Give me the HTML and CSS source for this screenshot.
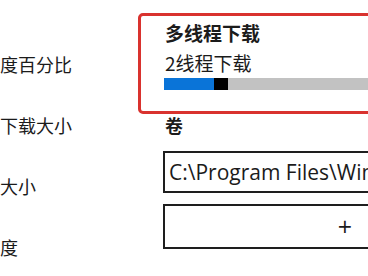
FILE: index.html
```html
<!DOCTYPE html>
<html lang="zh-CN">
<head>
<meta charset="utf-8">
<link rel="stylesheet" href="styles.css">
</head>
<body>
<div class="page">
  <div class="labels">
    <div class="label">度百分比</div>
    <div class="label">下载大小</div>
    <div class="label">大小</div>
    <div class="label">度</div>
  </div>
  <div class="panel">
    <div class="card">
      <div class="card-title">多线程下载</div>
      <div class="card-sub">2线程下载</div>
      <div class="bar">
        <div class="bar-blue"></div>
        <div class="bar-thumb"></div>
      </div>
    </div>
    <div class="section">卷</div>
    <div class="textbox">C:\Program Files\Win</div>
    <button class="addbtn">+</button>
  </div>
</div>
</body>
</html>
```
FILE: styles.css
```css
html, body {
  margin: 0;
  padding: 0;
  background: #ffffff;
  overflow: hidden;
}
body {
  width: 368px;
  height: 276px;
  font-family: "Noto Sans CJK SC", "Noto Sans", sans-serif;
  color: #1b1b1b;
}
.page {
  display: flex;
  width: 368px;
  overflow: hidden;
}
.labels {
  width: 138px;
  flex: none;
  display: flex;
  flex-direction: column;
  padding-top: 52px;
  gap: 37px;
}
.label {
  font-size: 18px;
  line-height: 24px;
  white-space: nowrap;
}
.panel {
  flex: none;
  width: 230px;
  display: flex;
  flex-direction: column;
  padding-top: 13px;
}
.card {
  width: 500px;
  height: 90px;
  border: 3px solid #d9322e;
  border-radius: 5px;
  padding: 5px 0 0 24px;
  box-sizing: content-box;
}
.card-title {
  font-size: 19px;
  line-height: 24px;
  font-weight: bold;
}
.card-sub {
  font-size: 19px;
  line-height: 24px;
  margin-top: 6px;
}
.bar {
  display: flex;
  margin-top: 3px;
  margin-left: -1px;
  height: 12px;
  width: 480px;
  background: #c2c2c2;
}
.bar-blue {
  width: 50px;
  background: #0a74d8;
}
.bar-thumb {
  width: 14px;
  background: #000000;
}
.section {
  margin-top: 0;
  margin-left: 27px;
  font-size: 18px;
  line-height: 22px;
  font-weight: bold;
}
.textbox {
  margin-top: 15px;
  margin-left: 25px;
  width: 400px;
  height: 38px;
  border: 2px solid #1e1e1e;
  font-family: "Open Sans", "Noto Sans", sans-serif;
  font-size: 21px;
  line-height: 38px;
  padding-left: 4px;
  white-space: nowrap;
  flex: none;
}
.addbtn {
  margin-top: 11px;
  margin-left: 25px;
  width: 364px;
  height: 45px;
  flex: none;
  border: 2px solid #1e1e1e;
  background: #ffffff;
  font-family: "Open Sans", "Noto Sans", sans-serif;
  font-size: 25px;
  line-height: 1;
  padding: 0;
  color: #1b1b1b;
  text-align: center;
}
```
